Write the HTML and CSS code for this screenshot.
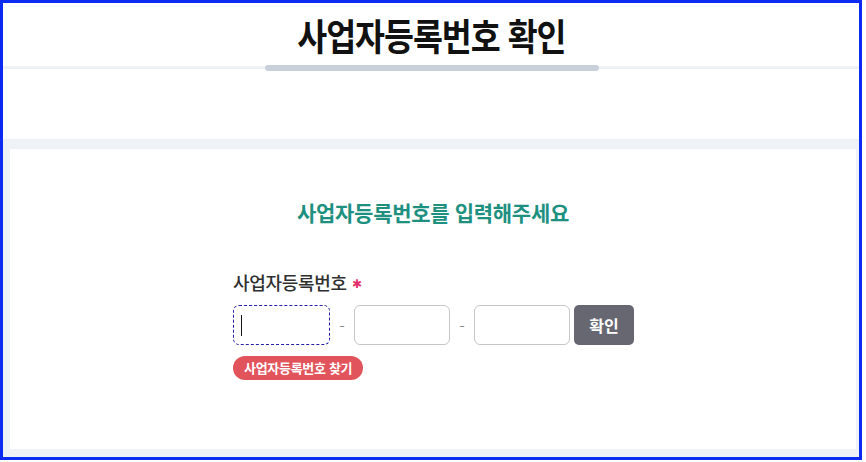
FILE: index.html
```html
<!DOCTYPE html>
<html lang="ko">
<head>
  <meta charset="UTF-8" />
  <meta name="viewport" content="width=device-width, initial-scale=1.0"/>
  <title>사업자등록번호 확인</title>
  <link rel="stylesheet" href="styles.css">
</head>
<body>
  <div class="frame">
    <header class="top">
      <h1>사업자등록번호 확인</h1>
    </header>
    <div class="divider"><span class="divider-bar"></span></div>
    <div class="spacer"></div>

    <section class="panel">
      <div class="card">
        <h2 class="lead">사업자등록번호를 입력해주세요</h2>

        <form class="biz-form" onsubmit="return false">
          <label class="field-label">사업자등록번호<span class="req">✱</span></label>
          <div class="field-row">
            <div class="input-wrap">
              <input class="num-input is-active" type="text" maxlength="3">
              <span class="caret"></span>
            </div>
            <span class="dash">-</span>
            <input class="num-input" type="text" maxlength="2">
            <span class="dash">-</span>
            <input class="num-input" type="text" maxlength="5">
            <button class="check-btn" type="submit">확인</button>
          </div>
          <a class="find-badge" href="#">사업자등록번호 찾기</a>
        </form>
      </div>
    </section>
  </div>
</body>
</html>
```

FILE: styles.css
```css
:root {
  --frame: #0b2bf2;
  --line: #eef2f6;
  --bar: #c8d0da;
  --teal: #1e9080;
  --text: #2b2b2b;
  --red: #e2545c;
  --btn: #676772;
}

* {
  box-sizing: border-box;
  margin: 0;
  padding: 0;
}

body {
  font-family: "Noto Sans CJK KR", "Noto Sans", sans-serif;
  background: #fff;
  color: var(--text);
}

.frame {
  width: 862px;
  height: 460px;
  border: 3px solid var(--frame);
  display: flex;
  flex-direction: column;
  background: #fff;
}

.top {
  height: 63px;
  display: flex;
  justify-content: center;
  align-items: center;
}

.top h1 {
  font-size: 37px;
  font-weight: 600;
  color: #111;
  letter-spacing: -1.2px;
  line-height: 1;
  margin-top: 1px;
  transform: scaleX(0.88);
}

.divider {
  height: 3px;
  background: var(--line);
  display: flex;
  justify-content: center;
  align-items: center;
}

.divider-bar {
  display: block;
  width: 334px;
  height: 6px;
  border-radius: 4px;
  background: var(--bar);
  margin-left: 1px;
}

.spacer {
  height: 70px;
}

.panel {
  flex: 1;
  background: var(--line);
  padding: 10px 3px 8px 7px;
  display: flex;
}

.card {
  flex: 1;
  background: #fff;
  padding-top: 48px;
  display: flex;
  flex-direction: column;
  align-items: center;
}

.lead {
  font-size: 21px;
  font-weight: 600;
  line-height: 30px;
  color: var(--teal);
  letter-spacing: -0.3px;
}

.biz-form {
  width: 400px;
  margin-top: 43px;
  display: flex;
  flex-direction: column;
  align-items: flex-start;
}

.field-label {
  font-size: 18px;
  line-height: 25px;
  font-weight: 500;
  color: #2f2f2f;
  letter-spacing: -0.3px;
}

.req {
  color: #e3306a;
  font-size: 12px;
  vertical-align: 2px;
  margin-left: 5px;
}

.field-row {
  margin-top: 10px;
  display: flex;
  align-items: center;
}

.input-wrap {
  position: relative;
}

.num-input {
  width: 96px;
  height: 40px;
  border: 1px solid #c6c6c6;
  border-radius: 6px;
  outline: none;
  font-size: 16px;
  padding: 0 8px;
  background: #fff;
}

.num-input.is-active {
  width: 97px;
  border: 1px dashed #2020a8;
}

.caret {
  position: absolute;
  left: 8px;
  top: 10px;
  width: 1px;
  height: 21px;
  background: #111;
}

.dash {
  width: 24px;
  text-align: center;
  color: #888;
  font-size: 15px;
}

.check-btn {
  margin-left: 4px;
  width: 60px;
  height: 40px;
  border: none;
  border-radius: 5px;
  background: var(--btn);
  color: #fff;
  font-family: inherit;
  font-size: 16px;
  font-weight: 700;
  cursor: pointer;
}

.find-badge {
  margin-top: 11px;
  height: 24px;
  padding: 0 11px;
  border-radius: 12px;
  background: var(--red);
  color: #fff;
  font-size: 13px;
  font-weight: 700;
  line-height: 24px;
  letter-spacing: -0.3px;
  text-decoration: none;
}
```
